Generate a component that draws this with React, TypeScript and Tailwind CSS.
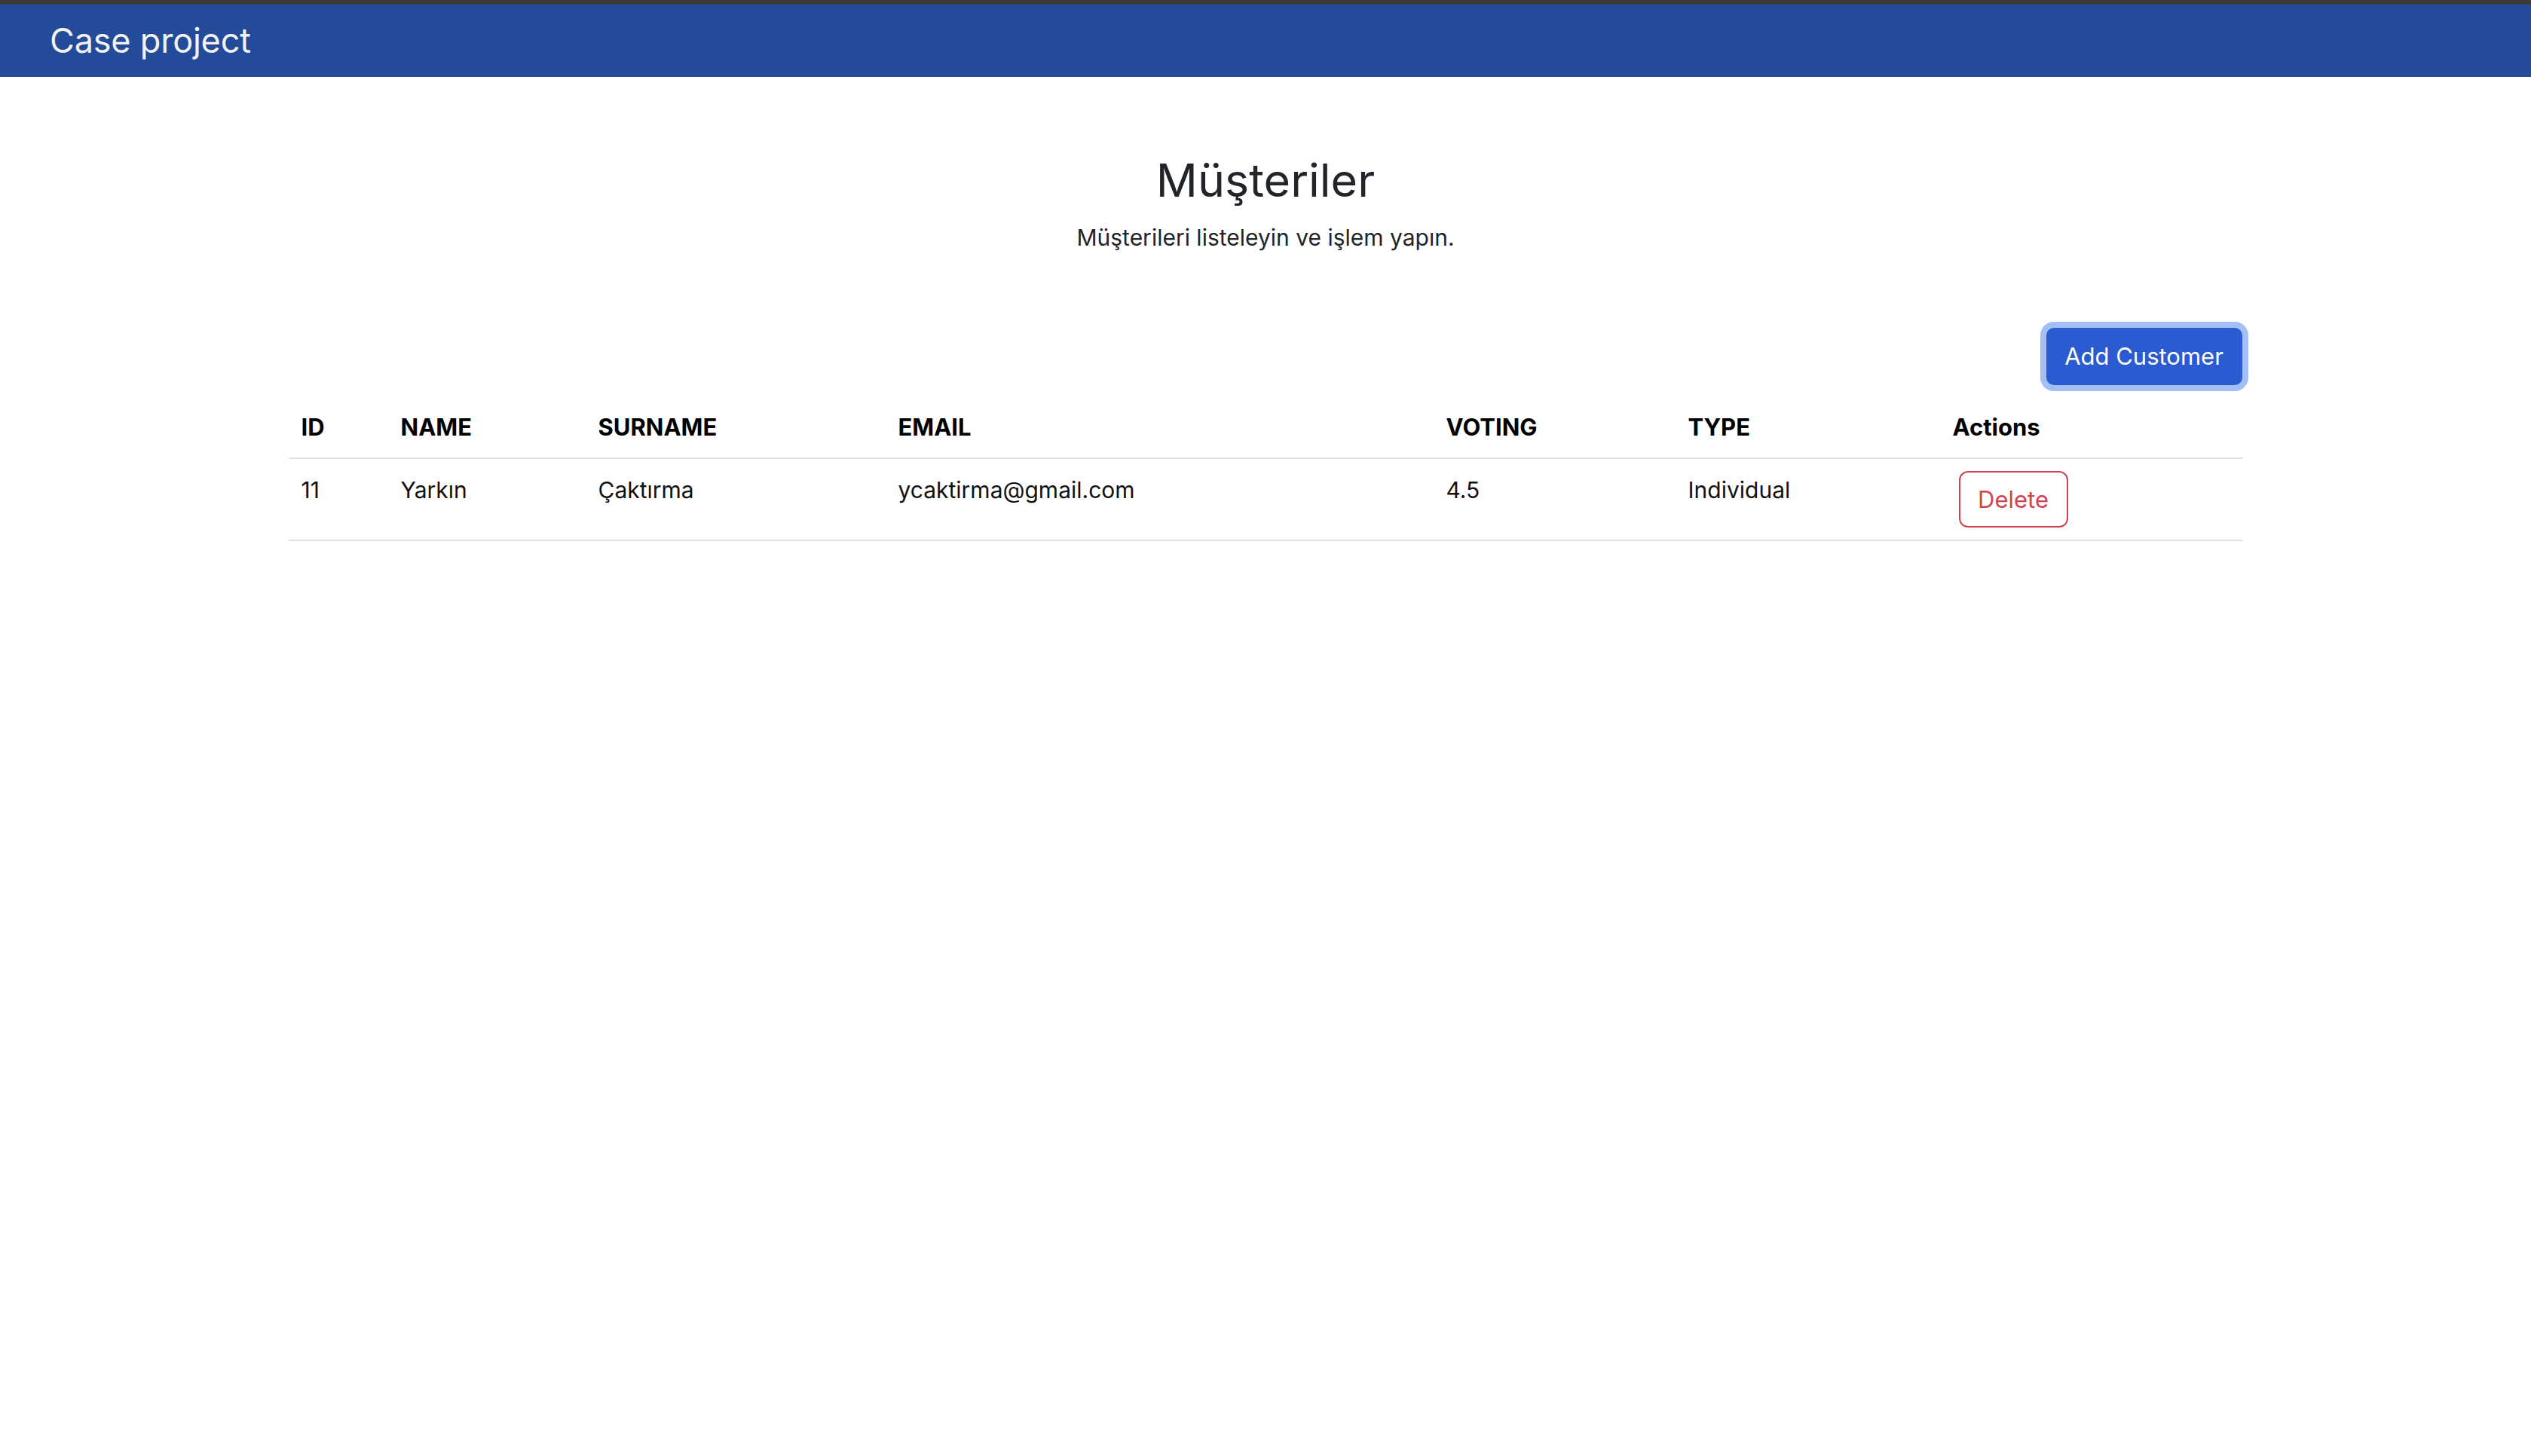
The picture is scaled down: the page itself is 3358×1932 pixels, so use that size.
const customers = [
  {
    id: 11,
    name: "Yarkın",
    surname: "Çaktırma",
    email: "ycaktirma@gmail.com",
    voting: "4.5",
    type: "Individual",
  },
];

export default function App() {
  return (
    <div
      className="min-h-screen bg-white text-[#212529]"
      style={{ fontFamily: "Inter, 'Noto Sans', sans-serif" }}
    >
      <nav className="h-[102px] border-t-[6px] border-[#3b3b3b] bg-[#244b99] flex items-center px-[66px]">
        <span className="text-[45px] leading-none text-[#f2f2f2] tracking-[-0.2px] -mt-[1px]">
          Case project
        </span>
      </nav>

      <main className="w-[2593px] mx-auto">
        <div className="text-center pt-[99px]">
          <h1 className="text-[61px] leading-[76px] font-normal text-[#212529]">
            Müşteriler
          </h1>
          <p className="text-[30px] leading-[44px] mt-[16px] text-[#212529]">
            Müşterileri listeleyin ve işlem yapın.
          </p>
        </div>

        <div className="flex justify-end mt-[98px]">
          <button className="h-[76px] w-[260px] rounded-[10px] bg-[#2a5bd0] text-white text-[31px] ring-[8px] ring-[#a3bff5] mr-[1px]">
            Add Customer
          </button>
        </div>

        <table className="w-full mt-[16px] border-collapse text-left">
          <thead>
            <tr className="border-b-2 border-[#dee2e6] text-black">
              <th className="w-[132px] px-[17px] py-[16px] text-[31px] leading-[48px] font-bold">ID</th>
              <th className="w-[262px] px-[17px] py-[16px] text-[31px] leading-[48px] font-bold">NAME</th>
              <th className="w-[398px] px-[17px] py-[16px] text-[31px] leading-[48px] font-bold">SURNAME</th>
              <th className="w-[727px] px-[17px] py-[16px] text-[31px] leading-[48px] font-bold">EMAIL</th>
              <th className="w-[321px] px-[17px] py-[16px] text-[31px] leading-[48px] font-bold">VOTING</th>
              <th className="w-[351px] px-[17px] py-[16px] text-[31px] leading-[48px] font-bold">TYPE</th>
              <th className="px-[17px] py-[16px] text-[31px] leading-[48px] font-bold">Actions</th>
            </tr>
          </thead>
          <tbody>
            {customers.map((c) => (
              <tr key={c.id} className="border-b-2 border-[#dee2e6] text-[30px] text-[#111] align-top">
                <td className="px-[17px] py-[16px] leading-[50px]">{c.id}</td>
                <td className="px-[17px] py-[16px] leading-[50px]">{c.name}</td>
                <td className="px-[17px] py-[16px] leading-[50px]">{c.surname}</td>
                <td className="px-[17px] py-[16px] leading-[50px]">{c.email}</td>
                <td className="px-[17px] py-[16px] leading-[50px]">{c.voting}</td>
                <td className="px-[17px] py-[16px] leading-[50px]">{c.type}</td>
                <td className="px-[17px] py-[16px]">
                  <button className="ml-[8px] h-[75px] w-[145px] rounded-[12px] border-2 border-[#d1434f] text-[#d1434f] text-[31px] leading-none">
                    Delete
                  </button>
                </td>
              </tr>
            ))}
          </tbody>
        </table>
      </main>
    </div>
  );
}
